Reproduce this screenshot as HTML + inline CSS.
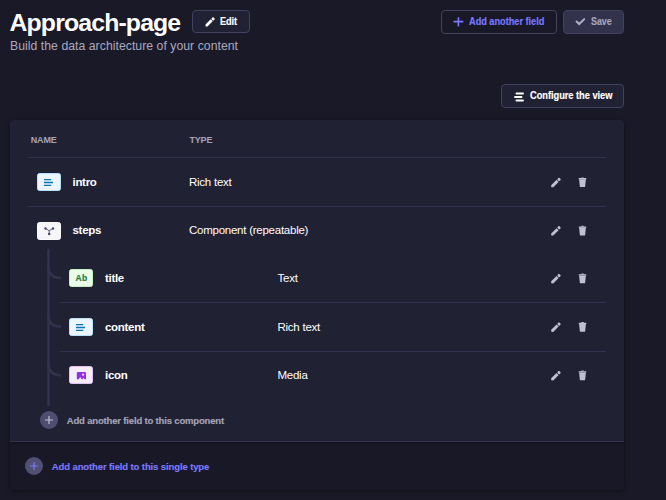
<!DOCTYPE html>
<html><head><meta charset="utf-8">
<style>
*{box-sizing:border-box;margin:0;padding:0}
html,body{width:666px;height:500px;overflow:hidden;background:#1a1927;font-family:"Liberation Sans",sans-serif;color:#fff}
.abs{position:absolute}
.title{left:9.5px;top:8px;font-size:24.8px;font-weight:700;letter-spacing:-0.85px;line-height:30px;white-space:nowrap}
.sub{left:10px;top:39px;font-size:12.25px;color:#aaa9c1;letter-spacing:0.03px;line-height:14px;white-space:nowrap}
.btn{position:absolute;border:1px solid #42415f;border-radius:4px;height:23.5px}
.btn span{position:absolute;font-size:10px;font-weight:700;line-height:12px;-webkit-text-stroke:0.15px currentColor;transform-origin:0 0;white-space:nowrap;letter-spacing:-0.42px}
.card{left:10px;top:120px;width:614px;height:369.5px;border-radius:4px;background:#181826;box-shadow:0 1px 5px rgba(0,0,0,0.45);overflow:hidden}
.cardtop{left:0;top:0;width:614px;height:321.8px;background:#212134;border-bottom:1px solid #34334f;box-shadow:0 1px 2px rgba(0,0,0,0.35)}
.hd{font-size:9px;font-weight:700;color:#a5a5ba;line-height:10px;letter-spacing:-0.2px}
.sep{height:1px;background:#32324d}
.name{font-size:11.5px;font-weight:700;line-height:14px;letter-spacing:-0.3px;white-space:nowrap;color:#fff}
.type{font-size:11.5px;font-weight:400;line-height:14px;letter-spacing:-0.25px;white-space:nowrap;color:#fff}
.ibox{width:24px;height:18px;border-radius:2.5px;border:1px solid}
.add{font-size:9.5px;font-weight:700;line-height:12px;white-space:nowrap;letter-spacing:-0.17px;-webkit-text-stroke:0.15px currentColor}
</style></head><body>
<svg width="0" height="0" style="position:absolute"><defs>
<g id="pencil"><g transform="translate(1.6,10.4) rotate(-45)"><path d="M0 0 L1.3 -1.4 H8.6 V1.4 H1.3 Z"/><rect x="9.3" y="-1.45" width="2.6" height="2.9" rx="0.9"/></g></g>
</defs></svg>
<div class="abs title">Approach-page</div>
<div class="abs sub">Build the data architecture of your content</div>

<!-- Edit button -->
<div class="btn" style="left:192.2px;top:9.8px;width:57.8px;background:#212134">
  <svg class="abs" style="left:10.4px;top:4.9px" width="12" height="12" viewBox="0 0 12 12"><use href="#pencil" fill="#fff"/></svg>
  <span style="left:27px;top:5px;color:#fff;letter-spacing:-0.1px;transform:scaleX(0.92)">Edit</span>
</div>

<!-- Add another field -->
<div class="btn" style="left:440.5px;top:10px;width:116px;background:#181826">
  <svg class="abs" style="left:11.5px;top:6px" width="11" height="11" viewBox="0 0 11 11"><path d="M5.4 0.2V9.4M0.5 4.6H10.3" stroke="#7b79ff" stroke-width="1.6"/></svg>
  <span style="left:27.5px;top:4.5px;color:#7b79ff;letter-spacing:-0.05px;transform:scaleX(0.925)">Add another field</span>
</div>

<!-- Save -->
<div class="btn" style="left:563px;top:10px;width:61px;background:#32324d">
  <svg class="abs" style="left:11px;top:7px" width="11" height="9" viewBox="0 0 11 9"><path d="M1.6 3.5 L4.2 6 L9.2 1.1" stroke="#b0b0c6" stroke-width="2" fill="none" stroke-linecap="round"/></svg>
  <span style="left:27px;top:4.5px;color:#a5a5ba;letter-spacing:-0.1px;transform:scaleX(0.9)">Save</span>
</div>

<!-- Configure the view -->
<div class="btn" style="left:501px;top:84.2px;width:123.2px;height:23.8px;background:#212134">
  <svg class="abs" style="left:12px;top:6.5px" width="11" height="10" viewBox="0 0 11 10"><path d="M2.5 1.5H9M1 5H7.5M2.5 8.5H9" stroke="#fff" stroke-width="1.9" stroke-linecap="round"/></svg>
  <span style="left:27.5px;top:4.5px;color:#fff;letter-spacing:-0.05px;transform:scaleX(0.93)">Configure the view</span>
</div>

<!-- Card -->
<div class="abs card">
  <div class="abs cardtop">
    <div class="abs hd" style="left:20.8px;top:15px">NAME</div>
    <div class="abs hd" style="left:179.5px;top:15px">TYPE</div>
    <div class="abs sep" style="left:18px;top:37px;width:578px"></div>

    <!-- intro -->
    <div class="abs ibox" style="left:26.5px;top:53px;background:#eaf5ff;border-color:#b8e1ff">
      <svg class="abs" style="left:5.4px;top:4px" width="11" height="9" viewBox="0 0 11 9"><path d="M1 1.6H8.2M1 4.5H10.1M1 7.3H8.2" stroke="#0c75af" stroke-width="1.3"/></svg>
    </div>
    <div class="abs name" style="left:62.5px;top:55px">intro</div>
    <div class="abs type" style="left:179px;top:55px">Rich text</div>
    <div class="abs sep" style="left:17.5px;top:86px;width:578.5px"></div>

    <!-- steps -->
    <div class="abs ibox" style="left:26.5px;top:101.5px;background:#f6f6f9;border-color:#fafafc">
      <svg class="abs" style="left:0;top:0" width="22" height="16" viewBox="0 0 22 16"><path d="M7.5 5.4L11.2 7.8L15 5.4M11.2 7.8V10.9" stroke="#4a4a6a" stroke-width="0.9" fill="none"/><circle cx="7.5" cy="5.4" r="1.25" fill="#4a4a6a"/><circle cx="15" cy="5.4" r="1.25" fill="#4a4a6a"/><circle cx="11.2" cy="10.9" r="1.25" fill="#4a4a6a"/></svg>
    </div>
    <div class="abs name" style="left:62.5px;top:103px">steps</div>
    <div class="abs type" style="left:179px;top:103px">Component (repeatable)</div>

    <!-- tree line -->
    <svg class="abs" style="left:0;top:0" width="614" height="321">
      <path d="M38.5 130 V285" stroke="#32324d" stroke-width="2.5" fill="none" stroke-linecap="round"/>
      <path d="M38.5 146 Q38.5 158 51 158" stroke="#32324d" stroke-width="2.5" fill="none"/>
      <path d="M38.5 194.8 Q38.5 206.8 51 206.8" stroke="#32324d" stroke-width="2.5" fill="none"/>
      <path d="M38.5 243.3 Q38.5 255.3 51 255.3" stroke="#32324d" stroke-width="2.5" fill="none"/>
    </svg>

    <!-- title -->
    <div class="abs ibox" style="left:59.2px;top:149px;background:#eafbe7;border-color:#c6f0c2">
      <div class="abs" style="left:0.4px;top:3.4px;width:22px;text-align:center;font-size:8.5px;font-weight:700;color:#2c7a43;line-height:11px;letter-spacing:0.4px;-webkit-text-stroke:0.2px #2c7a43">Ab</div>
    </div>
    <div class="abs name" style="left:95px;top:151px">title</div>
    <div class="abs type" style="left:267.5px;top:151px">Text</div>
    <div class="abs sep" style="left:50px;top:182px;width:546px"></div>

    <!-- content -->
    <div class="abs ibox" style="left:59px;top:198px;background:#eaf5ff;border-color:#b8e1ff">
      <svg class="abs" style="left:5.4px;top:4px" width="11" height="9" viewBox="0 0 11 9"><path d="M1 1.6H8.2M1 4.5H10.1M1 7.3H8.2" stroke="#0c75af" stroke-width="1.3"/></svg>
    </div>
    <div class="abs name" style="left:95px;top:199.5px">content</div>
    <div class="abs type" style="left:267.5px;top:199.5px">Rich text</div>
    <div class="abs sep" style="left:50px;top:231px;width:546px"></div>

    <!-- icon -->
    <div class="abs ibox" style="left:59px;top:246px;background:#f6ecfc;border-color:#e0c1f4">
      <svg class="abs" style="left:6px;top:3.5px" width="11" height="10" viewBox="0 0 11 10"><path d="M0.8 2Q0.8 1.1 1.7 1.1H9.1Q10 1.1 10 2V8.3H8.5L7.3 6.8L6.6 8.3H5.6L4.2 6.1L2.7 8.3H0.8Z" fill="#9130e6"/><circle cx="7.1" cy="3.7" r="1.1" fill="#f6ecfc"/></svg>
    </div>
    <div class="abs name" style="left:95px;top:248px">icon</div>
    <div class="abs type" style="left:267.5px;top:248px">Media</div>

    <!-- add to component -->
    <div class="abs" style="left:29.8px;top:291px;width:18px;height:18px;border-radius:50%;background:#4f4e70">
      <svg class="abs" style="left:4px;top:4px" width="10" height="10" viewBox="0 0 10 10"><path d="M5 1V9M1 5H9" stroke="#c0c0cf" stroke-width="1.2"/></svg>
    </div>
    <div class="abs add" style="left:56.8px;top:295.3px;color:#a5a5ba">Add another field to this component</div>
  </div>

  <!-- footer -->
  <div class="abs" style="left:14.6px;top:336.5px;width:18px;height:18px;border-radius:50%;background:#514f72">
    <svg class="abs" style="left:4px;top:4px" width="10" height="10" viewBox="0 0 10 10"><path d="M5 1V9M1 5H9" stroke="#7b79ff" stroke-width="1.2"/></svg>
  </div>
  <div class="abs add" style="left:41.8px;top:340.8px;color:#7b79ff;letter-spacing:-0.11px">Add another field to this single type</div>
</div>

<!-- action icons -->
<svg class="abs" style="left:0;top:0" width="666" height="500">
  <defs>
    <g id="pen" fill="#c0c0cf"><use href="#pencil" transform="translate(0.4,0.8) scale(1.04)"/></g>
    <g id="trash" fill="#c0c0cf"><rect x="0.4" y="1.3" width="7.8" height="1.3" rx="0.5"/><rect x="2.9" y="0.7" width="2.8" height="1" rx="0.5"/><path d="M0.9 2.5H7.7L6.9 10.3H1.7Z"/></g>
  </defs>
  <use href="#pen" x="549.2" y="175.6"/><use href="#trash" x="578.2" y="176.8"/>
  <use href="#pen" x="549.2" y="223.9"/><use href="#trash" x="578.2" y="225.1"/>
  <use href="#pen" x="549.2" y="271.7"/><use href="#trash" x="578.2" y="272.9"/>
  <use href="#pen" x="549.2" y="320.2"/><use href="#trash" x="578.2" y="321.4"/>
  <use href="#pen" x="549.2" y="368.7"/><use href="#trash" x="578.2" y="369.9"/>
</svg>
</body></html>
